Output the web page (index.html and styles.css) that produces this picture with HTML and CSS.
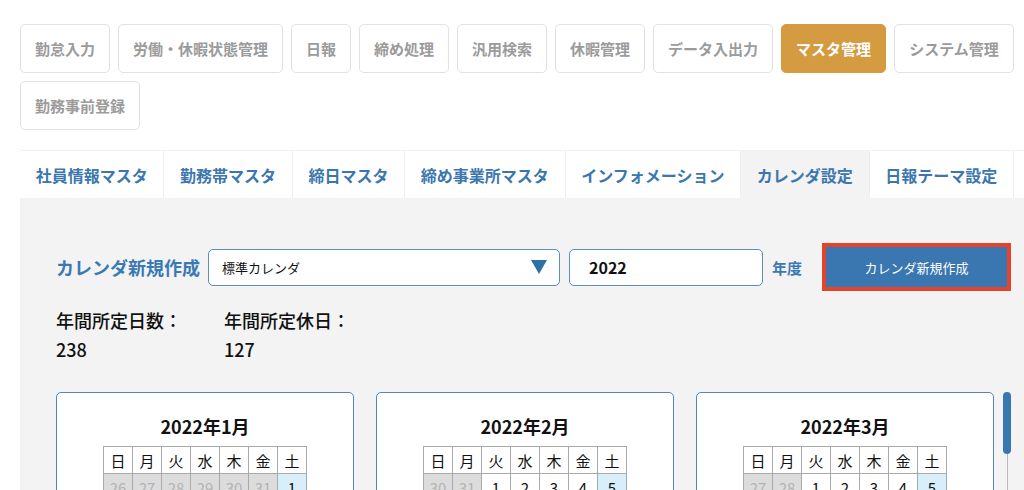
FILE: index.html
```html
<!DOCTYPE html>
<html lang="ja">
<head>
    <meta charset="UTF-8">
    <meta name="viewport" content="width=device-width, initial-scale=1.0">
    <title>カレンダ設定</title>
    <link rel="stylesheet" href="styles.css">
</head>
<body>
<div class="wrapper">

    <!-- main menu -->
    <nav class="main-nav">
        <a class="nav-btn">勤怠入力</a>
        <a class="nav-btn">労働・休暇状態管理</a>
        <a class="nav-btn">日報</a>
        <a class="nav-btn">締め処理</a>
        <a class="nav-btn">汎用検索</a>
        <a class="nav-btn">休暇管理</a>
        <a class="nav-btn">データ入出力</a>
        <a class="nav-btn active">マスタ管理</a>
        <a class="nav-btn">システム管理</a>
        <a class="nav-btn">勤務事前登録</a>
    </nav>

    <!-- master tabs -->
    <div class="tabs">
        <a class="tab">社員情報マスタ</a>
        <a class="tab">勤務帯マスタ</a>
        <a class="tab">締日マスタ</a>
        <a class="tab">締め事業所マスタ</a>
        <a class="tab">インフォメーション</a>
        <a class="tab active">カレンダ設定</a>
        <a class="tab">日報テーマ設定</a>
        <a class="tab">休日設定</a>
    </div>

    <div class="panel">
        <div class="form-row">
            <span class="form-label">カレンダ新規作成</span>
            <div class="select-box">
                <span>標準カレンダ</span>
                <svg class="select-arrow" width="16" height="14" viewBox="0 0 16 14">
                    <polygon points="0,0 16,0 8,14" fill="#2f6fa8"/>
                </svg>
            </div>
            <div class="year-input">2022</div>
            <span class="year-label">年度</span>
            <button class="create-btn">カレンダ新規作成</button>
        </div>

        <div class="stats">
            <div class="stat">
                <div>年間所定日数：</div>
                <div>238</div>
            </div>
            <div class="stat">
                <div>年間所定休日：</div>
                <div>127</div>
            </div>
        </div>

        <div class="calendar-area">
            <div class="calendars">
                <div class="cal-card">
                    <h3 class="cal-title">2022年1月</h3>
                    <table class="cal">
                        <tr><th>日</th><th>月</th><th>火</th><th>水</th><th>木</th><th>金</th><th>土</th></tr>
                        <tr><td class="other">26</td><td class="other">27</td><td class="other">28</td><td class="other">29</td><td class="other">30</td><td class="other">31</td><td class="sat">1</td></tr>
                        <tr><td class="sun">2</td><td>3</td><td>4</td><td>5</td><td>6</td><td>7</td><td class="sat">8</td></tr>
                        <tr><td class="sun">9</td><td class="sun">10</td><td>11</td><td>12</td><td>13</td><td>14</td><td class="sat">15</td></tr>
                        <tr><td class="sun">16</td><td>17</td><td>18</td><td>19</td><td>20</td><td>21</td><td class="sat">22</td></tr>
                        <tr><td class="sun">23</td><td>24</td><td>25</td><td>26</td><td>27</td><td>28</td><td class="sat">29</td></tr>
                        <tr><td class="sun">30</td><td>31</td><td class="other">1</td><td class="other">2</td><td class="other">3</td><td class="other">4</td><td class="other">5</td></tr>
                    </table>
                </div>
                <div class="cal-card">
                    <h3 class="cal-title">2022年2月</h3>
                    <table class="cal">
                        <tr><th>日</th><th>月</th><th>火</th><th>水</th><th>木</th><th>金</th><th>土</th></tr>
                        <tr><td class="other">30</td><td class="other">31</td><td>1</td><td>2</td><td>3</td><td>4</td><td class="sat">5</td></tr>
                        <tr><td class="sun">6</td><td>7</td><td>8</td><td>9</td><td>10</td><td class="sun">11</td><td class="sat">12</td></tr>
                        <tr><td class="sun">13</td><td>14</td><td>15</td><td>16</td><td>17</td><td>18</td><td class="sat">19</td></tr>
                        <tr><td class="sun">20</td><td>21</td><td>22</td><td class="sun">23</td><td>24</td><td>25</td><td class="sat">26</td></tr>
                        <tr><td class="sun">27</td><td>28</td><td class="other">1</td><td class="other">2</td><td class="other">3</td><td class="other">4</td><td class="other">5</td></tr>
                    </table>
                </div>
                <div class="cal-card">
                    <h3 class="cal-title">2022年3月</h3>
                    <table class="cal">
                        <tr><th>日</th><th>月</th><th>火</th><th>水</th><th>木</th><th>金</th><th>土</th></tr>
                        <tr><td class="other">27</td><td class="other">28</td><td>1</td><td>2</td><td>3</td><td>4</td><td class="sat">5</td></tr>
                        <tr><td class="sun">6</td><td>7</td><td>8</td><td>9</td><td>10</td><td>11</td><td class="sat">12</td></tr>
                        <tr><td class="sun">13</td><td>14</td><td>15</td><td>16</td><td>17</td><td>18</td><td class="sat">19</td></tr>
                        <tr><td class="sun">20</td><td class="sun">21</td><td>22</td><td>23</td><td>24</td><td>25</td><td class="sat">26</td></tr>
                        <tr><td class="sun">27</td><td>28</td><td>29</td><td>30</td><td>31</td><td class="other">1</td><td class="other">2</td></tr>
                    </table>
                </div>
            </div>
            <!-- scrollbar of the calendar list -->
            <div class="scroll-track">
                <div class="scroll-thumb"></div>
            </div>
        </div>
    </div>

</div>
</body>
</html>
```

FILE: styles.css
```css
body {
    margin: 0;
    padding: 24px 0 0 20px;
    background: #fff;
    font-family: "Noto Sans CJK JP", "Noto Sans", sans-serif;
    color: #111;
    overflow: hidden;
}

.wrapper {
    width: 1027px;
}

/* main menu buttons */
.main-nav {
    display: flex;
    flex-wrap: wrap;
    gap: 8px;
}

.nav-btn {
    display: flex;
    align-items: center;
    box-sizing: border-box;
    height: 49px;
    padding: 0 14px;
    border: 1px solid #e2e2e2;
    border-radius: 5px;
    font-size: 15px;
    font-weight: bold;
    color: #9b9b9b;
    background: #fff;
}

.nav-btn.active {
    background-color: #d49b41;
    border-color: #d49b41;
    color: #fff;
}

/* master tabs */
.tabs {
    display: flex;
    margin-top: 20px;
    border-top: 1px solid #f2f2f2;
    overflow: hidden;
}

.tab {
    flex-shrink: 0;
    display: flex;
    align-items: center;
    height: 47px;
    padding: 0 15.7px;
    border-right: 1px solid #eee;
    font-size: 16px;
    font-weight: bold;
    color: #3b77ae;
    background: #fff;
    white-space: nowrap;
}

.tab.active {
    background: #f3f3f3;
}

.panel {
    background: #f3f3f3;
    padding: 45px 36px 40px 36px;
}

/* create row */
.form-row {
    display: flex;
    align-items: center;
    height: 48px;
}

.form-label {
    font-size: 18px;
    font-weight: bold;
    color: #3b79b3;
}

.year-label {
    font-size: 15px;
    font-weight: bold;
    color: #3b79b3;
}

.select-box {
    display: flex;
    align-items: center;
    justify-content: space-between;
    box-sizing: border-box;
    width: 352px;
    height: 37px;
    margin-left: 8px;
    padding: 0 12px 0 13px;
    background: #fff;
    border: 1px solid #5b8fc2;
    border-radius: 5px;
    font-size: 13px;
    color: #111;
}

.year-input {
    display: flex;
    align-items: center;
    box-sizing: border-box;
    width: 194px;
    height: 37px;
    margin: 0 9px;
    padding-left: 19px;
    background: #fff;
    border: 1px solid #5b8fc2;
    border-radius: 5px;
    font-size: 16px;
    font-weight: bold;
    color: #111;
}

.create-btn {
    margin-left: auto;
    width: 189px;
    height: 48px;
    background-color: #3a76b0;
    border: 4px solid #e4442b;
    color: #fff;
    font-family: inherit;
    font-size: 13px;
    cursor: pointer;
}

/* yearly totals */
.stats {
    display: flex;
    gap: 42px;
    margin-top: 15px;
    font-size: 18px;
    font-weight: 500;
    line-height: 29px;
}

/* calendars */
.calendar-area {
    display: flex;
    gap: 9px;
    margin-top: 28px;
}

.calendars {
    display: grid;
    grid-template-columns: repeat(3, 298px);
    gap: 22px;
}

.cal-card {
    box-sizing: border-box;
    background: #fff;
    border: 1px solid #4f86bd;
    border-radius: 5px;
    padding: 19px 0 20px;
}

.cal-title {
    margin: 0 0 6px;
    text-align: center;
    font-size: 18px;
    line-height: 28px;
}

.cal {
    margin: 0 auto;
    border-collapse: collapse;
    font-size: 15px;
}

.cal th,
.cal td {
    width: 28px;
    height: 26px;
    padding: 0;
    border: 1px solid #a9a9a9;
    text-align: center;
    font-weight: normal;
}

.cal td.other {
    background: #dcdcdc;
    color: #b3b3b3;
}

.cal td.sat {
    background: #d8effb;
}

.cal td.sun {
    background: #fbe3e6;
}

.scroll-track {
    width: 8px;
    height: 200px;
    background: linear-gradient(#b9b9b9, #b9b9b9) no-repeat center / 1px 100%;
}

.scroll-thumb {
    width: 8px;
    height: 62px;
    border-radius: 4px;
    background: #3a76b0;
}
```
